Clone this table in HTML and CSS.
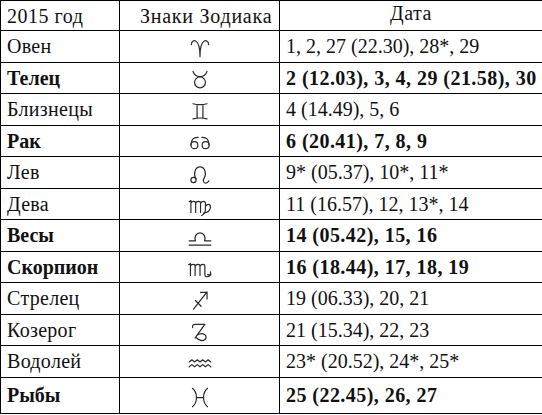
FILE: index.html
```html
<!DOCTYPE html>
<html lang="ru">
<head>
<meta charset="utf-8">
<title>Знаки Зодиака 2015</title>
<link rel="stylesheet" href="styles.css">
</head>
<body>
<table class="zodiac">
  <colgroup>
    <col class="c1"><col class="c2"><col class="c3">
  </colgroup>
  <thead>
    <tr class="head">
      <th class="year">2015 год</th>
      <th class="signs">Знаки Зодиака</th>
      <th class="date">Дата</th>
    </tr>
  </thead>
  <tbody>
    <tr>
      <td class="name">Овен</td>
      <td class="sym"><svg class="ic" viewBox="0 0 24 20"><path d="M4 7C4 3.5 6.5 2.8 8 3.5C10.5 4.8 12 9 12 18M20 7C20 3.5 17.5 2.8 16 3.5C13.5 4.8 12 9 12 18"/></svg></td>
      <td class="dates">1, 2, 27 (22.30), 28*, 29</td>
    </tr>
    <tr class="b">
      <td class="name">Телец</td>
      <td class="sym"><svg class="ic" viewBox="0 0 24 20"><path d="M5.5 2C6.5 5.3 9 6.8 12 6.8C15 6.8 17.5 5.3 18.5 2"/><circle cx="12" cy="12.2" r="5"/></svg></td>
      <td class="dates">2 (12.03), 3, 4, 29 (21.58), 30</td>
    </tr>
    <tr>
      <td class="name">Близнецы</td>
      <td class="sym"><svg class="ic" viewBox="0 0 24 20"><path d="M5.5 3.3Q12 5 18.5 3.3M5.5 17.3Q12 15.6 18.5 17.3M9.3 4.3V16.3M14.7 4.3V16.3"/></svg></td>
      <td class="dates">4 (14.49), 5, 6</td>
    </tr>
    <tr class="b">
      <td class="name">Рак</td>
      <td class="sym"><svg class="ic" viewBox="0 0 24 20"><circle cx="6.8" cy="12" r="3.2"/><path d="M3.6 12C3.6 7 6 4.4 10.2 4.8"/><circle cx="17.2" cy="12" r="3.2"/><path d="M20.4 12C20.4 7 18 4.4 13.8 4.8"/></svg></td>
      <td class="dates">6 (20.41), 7, 8, 9</td>
    </tr>
    <tr>
      <td class="name">Лев</td>
      <td class="sym"><svg class="ic" viewBox="0 0 24 20"><circle cx="6" cy="15.5" r="2.4"/><path d="M8.2 14.5C5.8 10.5 7 3.5 12 3.5C17 3.5 18.2 10.5 15.6 14.2C14.6 15.7 15 18.4 17.2 18.4C18.6 18.4 19.6 17.5 20.2 16.3"/></svg></td>
      <td class="dates">9* (05.37), 10*, 11*</td>
    </tr>
    <tr>
      <td class="name">Дева</td>
      <td class="sym"><svg class="ic" viewBox="0 0 24 20"><path d="M2 6L3.6 5V16M3.6 7.5C4.5 5.2 8 5.2 8 7.5V16M8 7.5C9 5.2 12.5 5.2 12.5 7.5V16M12.5 7.5C13.5 5.2 17 5.2 17 7.5V13.5C17 16 15.5 17.8 13.5 18.8M17 10.5C19 7.5 22 8 21.6 11.5C21.2 14.5 18.5 16.2 15.2 16.6"/></svg></td>
      <td class="dates">11 (16.57), 12, 13*, 14</td>
    </tr>
    <tr class="b">
      <td class="name">Весы</td>
      <td class="sym"><svg class="ic" viewBox="0 0 24 20"><path d="M2 17.5H22M2 13.5H7.8C6.4 10 8.6 6.2 12 6.2C15.4 6.2 17.6 10 16.2 13.5H22"/></svg></td>
      <td class="dates">14 (05.42), 15, 16</td>
    </tr>
    <tr class="b">
      <td class="name">Скорпион</td>
      <td class="sym"><svg class="ic" viewBox="0 0 24 20"><path d="M1.5 6L3.2 5V16M3.2 7.5C4 5.2 7.5 5.2 7.5 7.5V16M7.5 7.5C8.5 5.2 12 5.2 12 7.5V16M12 7.5C13 5.2 16.5 5.2 16.5 7.5V15C16.5 17.5 19 18 22 15.5M19 15.2L22 15.5L21.6 12.6"/></svg></td>
      <td class="dates">16 (18.44), 17, 18, 19</td>
    </tr>
    <tr>
      <td class="name">Стрелец</td>
      <td class="sym"><svg class="ic" viewBox="0 0 24 20"><path d="M6 18.5L18.5 2.5M12.5 3H18.5V9M7.8 10.5L13 15.8"/></svg></td>
      <td class="dates">19 (06.33), 20, 21</td>
    </tr>
    <tr>
      <td class="name">Козерог</td>
      <td class="sym"><svg class="ic" viewBox="0 0 24 20"><path d="M5.2 6C4.6 4 5.8 3 7.5 3H16.5L7.5 15.5M7.5 15.5C9.5 11.5 13.5 10.8 16.2 12.3C18.8 14 17.4 18 14 18C11.5 18 9.5 16.4 8.3 15"/></svg></td>
      <td class="dates">21 (15.34), 22, 23</td>
    </tr>
    <tr>
      <td class="name">Водолей</td>
      <td class="sym"><svg class="ic" viewBox="0 0 24 20"><path d="M2 9L4.5 7L7 9L9.5 7L12 9L14.5 7L17 9L19.5 7L22 9M2 13.5L4.5 11.5L7 13.5L9.5 11.5L12 13.5L14.5 11.5L17 13.5L19.5 11.5L22 13.5"/></svg></td>
      <td class="dates">23* (20.52), 24*, 25*</td>
    </tr>
    <tr class="b last">
      <td class="name">Рыбы</td>
      <td class="sym"><svg class="ic" viewBox="0 0 24 20"><path d="M5 2C10 6 10 15 5 19M19 2C14 6 14 15 19 19M8.5 10.5H15.5"/></svg></td>
      <td class="dates">25 (22.45), 26, 27</td>
    </tr>
  </tbody>
</table>
</body>
</html>
```

FILE: styles.css
```css
html, body {
  margin: 0;
  padding: 0;
  background: #fff;
}

.zodiac {
  border-collapse: collapse;
  table-layout: fixed;
  width: 542px;
  font-family: "Liberation Serif", "Times New Roman", serif;
  font-size: 20px;
  color: #111;
}

.c1 { width: 119px; }
.c2 { width: 160px; }
.c3 { width: 263px; }

.zodiac th,
.zodiac td {
  border: 1px solid #000;
  padding: 0 6px;
  vertical-align: middle;
  white-space: nowrap;
  line-height: 22px;
}

.zodiac th {
  font-weight: normal;
  text-align: left;
}

.head { height: 30px; }
.head .year { letter-spacing: 0.5px; }
.head .signs {
  padding-left: 20px;
  letter-spacing: 0.75px;
}
.head .date {
  text-align: center;
  vertical-align: top;
  padding-top: 1px;
  letter-spacing: 0.5px;
}

tbody tr { height: 31.5px; }
tbody tr.last { height: 36px; }

tbody td { padding-top: 2px; }

.name { letter-spacing: 0.3px; }

.b td { font-weight: bold; }
.b .name { letter-spacing: 0; }
.b .dates { letter-spacing: 0.45px; }

.sym {
  text-align: center;
}

.ic {
  display: inline-block;
  width: 26px;
  height: 22px;
  vertical-align: middle;
  position: relative;
  top: 1px;
  fill: none;
  stroke: #2a2a2a;
  stroke-width: 1.1;
  stroke-linecap: round;
  stroke-linejoin: round;
}
```
